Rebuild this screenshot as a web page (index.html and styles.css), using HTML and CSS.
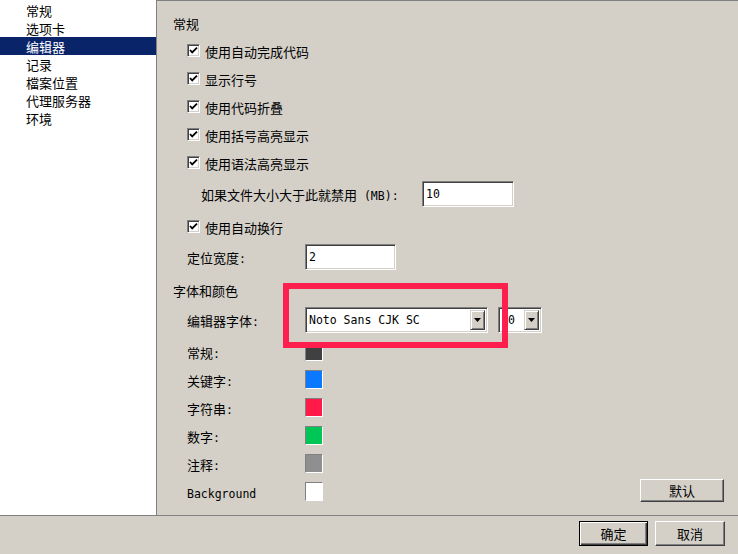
FILE: index.html
```html
<!DOCTYPE html>
<html>
<head>
<meta charset="utf-8">
<link rel="stylesheet" href="styles.css">
</head>
<body>
<div class="window">
  <div class="main">
    <ul class="nav">
      <li>常规</li>
      <li>选项卡</li>
      <li class="sel">编辑器</li>
      <li>记录</li>
      <li>檔案位置</li>
      <li>代理服务器</li>
      <li>环境</li>
    </ul>
    <div class="panel">
      <div class="row title t1">常规</div>
      <div class="row cb first"><span class="check"><svg viewBox="0 0 9 9" width="9" height="9"><path d="M1 4 L3.2 6.4 L8 1.6" fill="none" stroke="#000" stroke-width="1.8"/></svg></span><span>使用自动完成代码</span></div>
      <div class="row cb"><span class="check"><svg viewBox="0 0 9 9" width="9" height="9"><path d="M1 4 L3.2 6.4 L8 1.6" fill="none" stroke="#000" stroke-width="1.8"/></svg></span><span>显示行号</span></div>
      <div class="row cb"><span class="check"><svg viewBox="0 0 9 9" width="9" height="9"><path d="M1 4 L3.2 6.4 L8 1.6" fill="none" stroke="#000" stroke-width="1.8"/></svg></span><span>使用代码折叠</span></div>
      <div class="row cb"><span class="check"><svg viewBox="0 0 9 9" width="9" height="9"><path d="M1 4 L3.2 6.4 L8 1.6" fill="none" stroke="#000" stroke-width="1.8"/></svg></span><span>使用括号高亮显示</span></div>
      <div class="row cb"><span class="check"><svg viewBox="0 0 9 9" width="9" height="9"><path d="M1 4 L3.2 6.4 L8 1.6" fill="none" stroke="#000" stroke-width="1.8"/></svg></span><span>使用语法高亮显示</span></div>
      <div class="row mb"><span class="mb-label">如果文件大小大于此就禁用<span class="lat">&nbsp;(MB):</span></span><span class="input w92"><span class="lat">10</span></span></div>
      <div class="row cb wrap"><span class="check"><svg viewBox="0 0 9 9" width="9" height="9"><path d="M1 4 L3.2 6.4 L8 1.6" fill="none" stroke="#000" stroke-width="1.8"/></svg></span><span>使用自动换行</span></div>
      <div class="row lbl tab"><span class="label">定位宽度<span class="lat">:</span></span><span class="input w91"><span class="lat">2</span></span></div>
      <div class="row title t2">字体和颜色</div>
      <div class="row lbl font"><span class="label">编辑器字体<span class="lat">:</span></span>
        <span class="combo big"><span class="lat">Noto Sans CJK SC</span><span class="arrow"><svg viewBox="0 0 7 4" width="7" height="4"><path d="M0 0 H7 L3.5 4 Z" fill="#000"/></svg></span></span>
        <span class="combo small"><span class="lat">10</span><span class="arrow"><svg viewBox="0 0 7 4" width="7" height="4"><path d="M0 0 H7 L3.5 4 Z" fill="#000"/></svg></span></span>
      </div>
      <div class="row lbl color"><span class="label">常规<span class="lat">:</span></span><span class="swatch c-normal"></span></div>
      <div class="row lbl color"><span class="label">关键字<span class="lat">:</span></span><span class="swatch c-key"></span></div>
      <div class="row lbl color"><span class="label">字符串<span class="lat">:</span></span><span class="swatch c-str"></span></div>
      <div class="row lbl color"><span class="label">数字<span class="lat">:</span></span><span class="swatch c-num"></span></div>
      <div class="row lbl color"><span class="label">注释<span class="lat">:</span></span><span class="swatch c-cmt"></span></div>
      <div class="row lbl color"><span class="label"><span class="lat">Background</span></span><span class="swatch c-bg"></span><span class="btn default-btn">默认</span></div>
    </div>
  </div>
  <div class="footer">
    <span class="btn ok">确定</span>
    <span class="btn cancel">取消</span>
  </div>
  <div class="mark"></div>
</div>
</body>
</html>
```

FILE: styles.css
```css
* { box-sizing: border-box; }
html, body {
  margin: 0;
  padding: 0;
  width: 738px;
  height: 554px;
  overflow: hidden;
  background: #d4d0c8;
  font-family: "Noto Sans CJK SC", "DejaVu Sans Mono", sans-serif;
  font-size: 13px;
  color: #000;
}
.lat {
  font-family: "DejaVu Sans Mono", monospace;
  font-size: 11.5px;
}
.window {
  position: relative;
  width: 738px;
  height: 554px;
  display: flex;
  flex-direction: column;
}
.main {
  height: 515px;
  display: flex;
}
.nav {
  list-style: none;
  margin: 0;
  padding: 1px 0 0 0;
  width: 157px;
  flex: none;
  background: #fff;
  border-right: 1px solid #808080;
}
.nav li {
  height: 18px;
  line-height: 19px;
  padding-left: 26px;
  white-space: nowrap;
}
.nav li.sel {
  background: #0a246a;
  color: #fff;
}
.panel {
  flex: 1;
  border-top: 1px solid #808080;
  padding: 13px 14px 0 16px;
  display: flex;
  flex-direction: column;
}
.row {
  display: flex;
  align-items: center;
  white-space: nowrap;
  flex: none;
}
.title { height: 18px; }
.t2 { margin-top: 10px; }
.cb { height: 28px; padding-left: 14px; }
.cb.first { margin-top: 5px; }
.cb.wrap { height: 32px; }
.check {
  width: 13px;
  height: 13px;
  flex: none;
  margin-right: 5px;
  margin-top: -2px;
  background: #fff;
  border-top: 1px solid #808080;
  border-left: 1px solid #808080;
  border-right: 1px solid #fff;
  border-bottom: 1px solid #fff;
  box-shadow: inset 1px 1px 0 #404040, inset -1px -1px 0 #d4d0c8;
  display: flex;
  align-items: center;
  justify-content: center;
}
.check svg { display: block; }
.mb { height: 34px; padding-left: 28px; }
.mb-label { width: 221px; flex: none; }
.lbl { padding-left: 14px; }
.label { width: 118px; flex: none; }
.tab { height: 28px; }
.font { height: 36px; margin-top: 3px; }
.color { height: 28px; }
.input, .combo {
  height: 26px;
  background: #fff;
  border-top: 1px solid #808080;
  border-left: 1px solid #808080;
  border-right: 1px solid #fff;
  border-bottom: 1px solid #fff;
  box-shadow: inset 1px 1px 0 #404040, inset -1px -1px 0 #d4d0c8;
  padding-left: 3px;
  display: flex;
  align-items: center;
  flex: none;
}
.w92 { width: 92px; }
.w91 { width: 91px; }
.combo { position: relative; padding-left: 3px; }
.combo.big { width: 183px; }
.combo.small { width: 44px; margin-left: 10px; padding-left: 2px; }
.arrow {
  position: absolute;
  right: 2px;
  top: 2px;
  bottom: 2px;
  width: 15px;
  background: #d4d0c8;
  border-top: 1px solid #d4d0c8;
  border-left: 1px solid #d4d0c8;
  border-right: 1px solid #404040;
  border-bottom: 1px solid #404040;
  box-shadow: inset 1px 1px 0 #fff, inset -1px -1px 0 #808080;
  display: flex;
  align-items: center;
  justify-content: center;
}
.arrow svg { display: block; }
.swatch {
  width: 18px;
  height: 19px;
  flex: none;
  margin-top: -2px;
  border-top: 1px solid #808080;
  border-left: 1px solid #808080;
  border-right: 1px solid #fff;
  border-bottom: 1px solid #fff;
}
.c-normal { background: #404040; }
.c-key { background: #0a78ff; }
.c-str { background: #ff1a48; }
.c-num { background: #00c656; }
.c-cmt { background: #8f8f8f; }
.c-bg { background: #fff; }
.btn {
  height: 23px;
  background: #d4d0c8;
  border-top: 1px solid #fff;
  border-left: 1px solid #fff;
  border-right: 1px solid #404040;
  border-bottom: 1px solid #404040;
  box-shadow: inset -1px -1px 0 #808080;
  display: flex;
  align-items: center;
  justify-content: center;
}
.default-btn {
  width: 84px;
  margin-left: auto;
  margin-top: -4px;
}
.footer {
  flex: 1;
  border-top: 1px solid #808080;
  display: flex;
  justify-content: flex-end;
  align-items: flex-start;
  padding: 5px 13px 0 0;
  gap: 7px;
}
.footer .btn { height: 25px; }
.ok {
  width: 69px;
  border: 1px solid #000;
  box-shadow: inset 1px 1px 0 #fff, inset -1px -1px 0 #404040, inset -2px -2px 0 #808080;
}
.cancel { width: 70px; }
.mark {
  position: absolute;
  left: 283px;
  top: 283px;
  width: 225px;
  height: 65px;
  border: 6px solid #ff1f4f;
}
```
